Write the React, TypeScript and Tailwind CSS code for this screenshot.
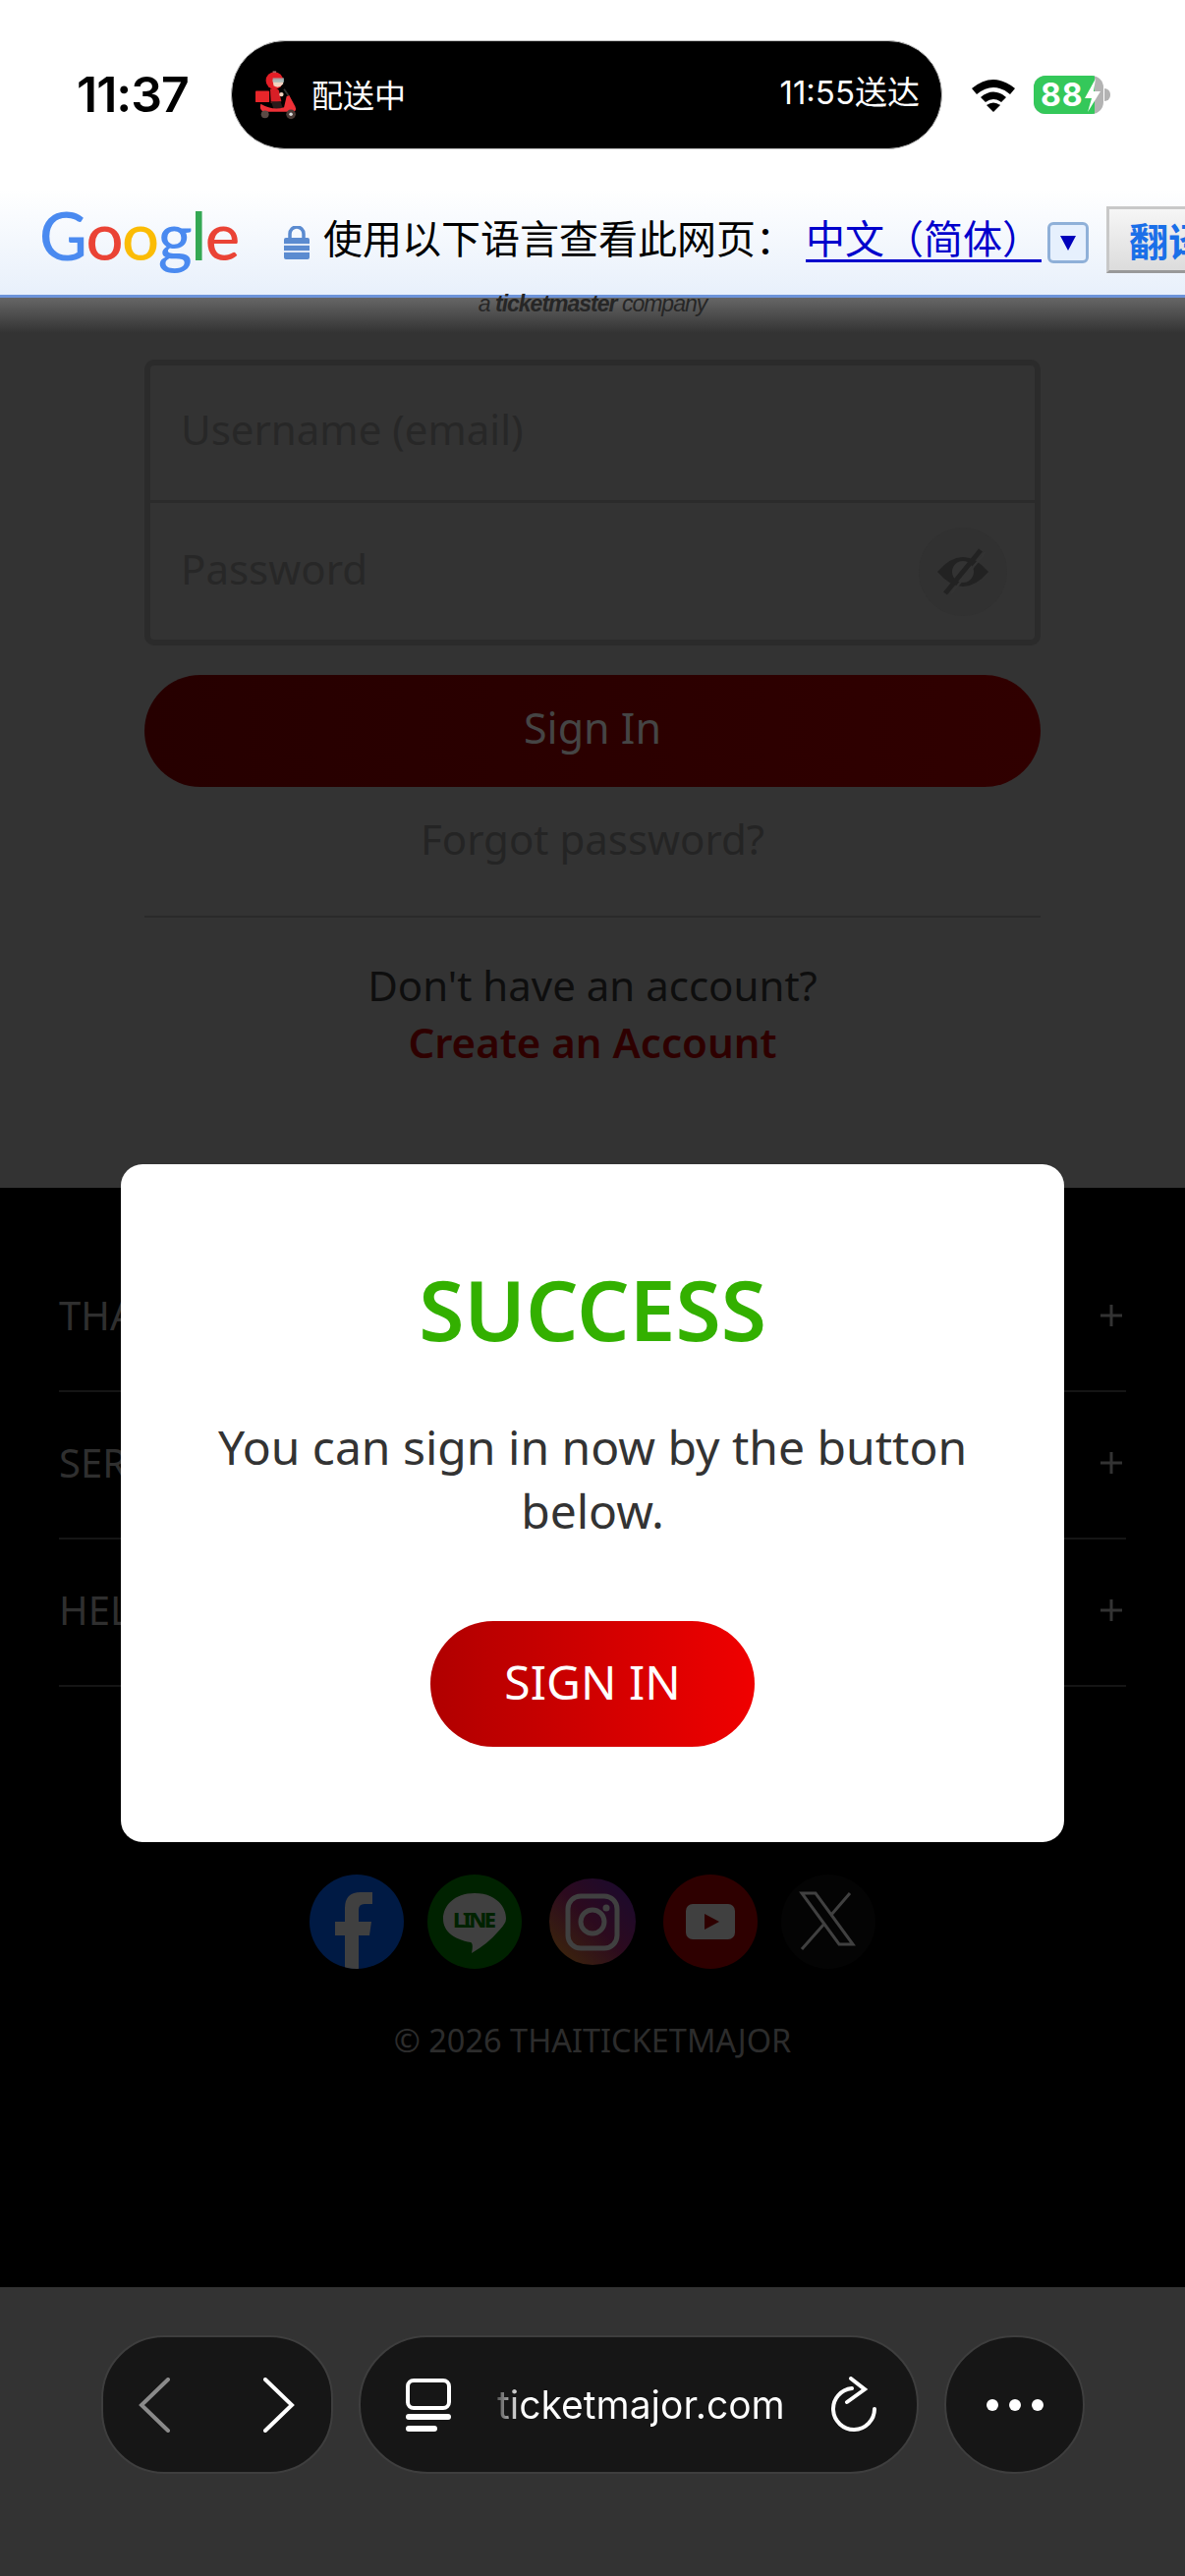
import React from "react";

const sans = "font-['Noto_Sans','Noto_Sans_CJK_SC',sans-serif]";

function Rider() {
  return (
    <svg width="44" height="52" viewBox="0 0 50 56" className="shrink-0">
      <rect x="0" y="23" width="16" height="13" rx="1" fill="#e8262a" />
      <path d="M17 21 q6-3 10 1 l3 13 l-12 2 z" fill="#d81f26" />
      <path d="M18 35 h11 l3 9 h-11 z" fill="#2a1a1a" />
      <path d="M6 38 q14 8 27 4 l3-13 l3-1 l7 13 q2 5 -2 6 h-34 q-6 -1 -4 -9z" fill="#ef3037" />
      <circle cx="11" cy="50" r="4.5" fill="#5a4a44" />
      <circle cx="41" cy="50" r="5.5" fill="#4a3a36" />
      <circle cx="41" cy="50" r="2" fill="#ddd" />
      <circle cx="22" cy="11" r="10" fill="#e41e26" />
      <rect x="20" y="0" width="4" height="2" fill="#a66" />
      <path d="M20 10 h12 v5 q-5 6 -11 2 z" fill="#f3d2c0" />
      <path d="M20 8 h13 v5 h-13z" fill="#9fb8b8" opacity=".85" />
      <path d="M33 21 l5 7" stroke="#333" strokeWidth="2" />
      <circle cx="30" cy="27" r="2.5" fill="#f3d2c0" />
    </svg>
  );
}

function Wifi() {
  return (
    <svg width="48" height="36" viewBox="0 0 48 36" className="shrink-0">
      <path d="M2 11 Q24 -7 46 11 L41 17 Q24 3 7 17 Z" fill="#000" />
      <path d="M11 20 Q24 9 37 20 L32 25 Q24 19 16 25 Z" fill="#000" />
      <path d="M24 35 L17 28 Q24 23 31 28 Z" fill="#000" />
    </svg>
  );
}

function Battery() {
  return (
    <div className="flex items-center shrink-0">
      <div className="relative w-[71px] h-[39px] rounded-[12px] overflow-hidden bg-[#b3b3b3] flex">
        <div className="w-[62px] h-full bg-[#34c85a] pl-[7px] flex items-center text-white font-['Inter',sans-serif] font-bold text-[32px] tracking-[1px] leading-none">
          88
        </div>
        <svg width="18" height="34" viewBox="0 0 18 34" className="absolute left-[51px] top-[3px]">
          <path d="M12 0 L1 20 H8 L4 34 L17 13 H10 Z" fill="#fff" />
        </svg>
      </div>
      <div className="w-[6px] h-[13px] bg-[#b3b3b3] rounded-r-[6px] ml-[1px]" />
    </div>
  );
}

function GoogleLogo() {
  return (
    <div className="w-[206px] shrink-0 font-['Lato',sans-serif] font-medium text-[67px] leading-none tracking-[-1.5px] flex -mt-[14px]">
      <span className="text-[#4a8af0]">G</span>
      <span className="text-[#ea4335]">o</span>
      <span className="text-[#fbbc05]">o</span>
      <span className="text-[#4a8af0]">g</span>
      <span className="text-[#34a853]">l</span>
      <span className="text-[#ea4335]">e</span>
    </div>
  );
}

function Lock() {
  return (
    <svg width="28" height="34" viewBox="0 0 28 34" className="shrink-0">
      <path d="M7 13 V8 a7 7 0 0 1 14 0 v5" fill="none" stroke="#5b8bd0" strokeWidth="3.5" />
      <rect x="1" y="12" width="26" height="22" rx="2" fill="#5b8bd0" />
      <path d="M1 19 H27 M1 26 H27" stroke="#dfe8f6" strokeWidth="2" />
    </svg>
  );
}

function SocialRow() {
  return (
    <div className="flex items-center justify-center gap-[24px]">
      <div className="w-[96px] h-[96px] rounded-full bg-[#001a44] overflow-hidden">
        <svg width="96" height="96" viewBox="0 0 96 96">
          <path d="M36 96 V62 H26 V48 H36 V34 Q36 18 52 18 H64 V30 H56 Q50 30 50 36 V48 H63 L61 62 H50 V96 Z" fill="#404040" />
        </svg>
      </div>
      <div className="w-[96px] h-[96px] rounded-full bg-[#002200] flex items-center justify-center">
        <svg width="96" height="96" viewBox="0 0 96 96">
          <path d="M48 19 C27 19 16 32 16 45 C16 58 27 66 44 69 Q47 70 45 80 Q62 70 72 58 Q80 50 80 45 C80 32 69 19 48 19 Z" fill="#404040" />
          <text x="48" y="54" textAnchor="middle" fontSize="22" fontWeight="800" fontFamily="Noto Sans, sans-serif" fill="#002200" textLength="44">LINE</text>
        </svg>
      </div>
      <div className="mx-[4px] w-[88px] h-[88px] rounded-full bg-[linear-gradient(45deg,#3f2a08,#2c0a1e_50%,#180a30)] flex items-center justify-center">
        <svg width="88" height="88" viewBox="0 0 88 88">
          <rect x="19" y="18" width="50" height="53" rx="13" fill="none" stroke="#404040" strokeWidth="5" />
          <circle cx="44" cy="44" r="12" fill="none" stroke="#404040" strokeWidth="5" />
          <circle cx="58" cy="30" r="3.5" fill="#404040" />
        </svg>
      </div>
      <div className="w-[96px] h-[96px] rounded-full bg-[#2e0000] flex items-center justify-center">
        <svg width="96" height="96" viewBox="0 0 96 96">
          <rect x="23" y="30" width="50" height="36" rx="7" fill="#404040" />
          <path d="M42 40 L57 48 L42 56 Z" fill="#2e0000" />
        </svg>
      </div>
      <div className="w-[96px] h-[96px] rounded-full bg-[#040404] flex items-center justify-center">
        <svg width="96" height="96" viewBox="0 0 96 96">
          <path d="M21 19 H35 L73 71 H59 Z" fill="none" stroke="#404040" strokeWidth="3" />
          <path d="M70 19 L51 41 M44 50 L21 76" stroke="#404040" strokeWidth="3" fill="none" />
        </svg>
      </div>
    </div>
  );
}

function FooterRow({ label }: { label: string }) {
  return (
    <div className="h-[150px] border-b-2 border-[#151515] flex items-center justify-between pb-[4px]">
      <span className="text-[40px] text-[#2f2f2f]">{label}</span>
      <svg width="24" height="24" viewBox="0 0 24 24" className="mr-[3px]">
        <path d="M12 1 V23 M1 12 H23" stroke="#333" strokeWidth="3" />
      </svg>
    </div>
  );
}

export default function App() {
  return (
    <div className={`relative w-[1206px] h-[2622px] overflow-hidden flex flex-col bg-[#333] ${sans}`}>
      {/* status bar */}
      <div className="h-[193px] shrink-0 bg-white flex items-start pt-[41px] pl-[78px]">
        <div className="w-[157px] h-[111px] flex items-center font-['Inter',sans-serif] font-semibold text-[50px] tracking-[-1px] text-black">11:37</div>
        <div className="w-[724px] h-[111px] rounded-[55px] bg-black border border-[#bbb] flex items-center justify-between pl-[24px] pr-[22px] text-white font-['Noto_Sans_CJK_SC',sans-serif] text-[32px]">
          <div className="flex items-center gap-[13px]">
            <Rider />
            <span className="-mt-[3px]">配送中</span>
          </div>
          <span className="font-['Inter','Noto_Sans_CJK_SC',sans-serif] text-[33px] -mt-[3px]">11:55送达</span>
        </div>
        <div className="h-[111px] flex items-center pl-[28px] gap-[17px]">
          <Wifi />
          <Battery />
        </div>
      </div>

      {/* translate bar */}
      <div className="h-[110px] shrink-0 bg-[linear-gradient(#fff,#e8f0fb)] border-b-[3px] border-[#6d93d9] flex items-center pl-[40px] overflow-hidden whitespace-nowrap text-[40px] font-['Noto_Sans_CJK_SC',sans-serif] text-black">
        <GoogleLogo />
        <div className="ml-[42px]"><Lock /></div>
        <span className="ml-[13px] w-[491px] shrink-0 -mt-[12px]">使用以下语言查看此网页：</span>
        <span className="w-[246px] shrink-0 h-[60px] leading-[56px] -mt-[8px] text-[#0000cc] underline underline-offset-[6px] decoration-[3px]">中文（简体）</span>
        <div className="w-[42px] h-[42px] shrink-0 rounded-[6px] border-[3px] border-[#8fb0d8] bg-[#e6f0fd] flex items-center justify-center">
          <svg width="20" height="20" viewBox="0 0 20 20"><path d="M2 3 H18 L10 18 Z" fill="#0000bb" /></svg>
        </div>
        <div className="ml-[18px] -mt-[6px] w-[120px] h-[68px] shrink-0 border-[3px] border-[#c8c8c8] border-b-[#999] bg-[linear-gradient(#f6f6f6,#dcdcdc)] text-[#1a6fe8] font-bold flex items-center pl-[20px]">
          翻译
        </div>
      </div>

      {/* login section */}
      <div className="h-[906px] shrink-0 relative bg-[linear-gradient(#666_0px,#333_36px)] flex flex-col items-center">
        <div className="h-[74px] w-full text-center text-[23px] -mt-[11px] italic font-['Liberation_Sans',sans-serif] tracking-[-1px] text-[#262626]">
          a <b>ticketmaster</b> company
        </div>
        <div className="w-[912px] h-[291px] rounded-[10px] border-[6px] border-[#2b2b2b] flex flex-col text-[42px] text-[#272727]">
          <div className="h-[140px] border-b-[3px] border-[#2b2b2b] flex items-center pl-[31px] pb-[8px]">Username (email)</div>
          <div className="flex-1 flex items-center justify-between pl-[31px] pr-[28px]">
            <span className="-mt-[6px]">Password</span>
            <div className="w-[90px] h-[90px] rounded-full bg-[#313131] flex items-center justify-center">
              <svg width="56" height="48" viewBox="0 0 56 48">
                <path d="M2 24 Q28 -6 54 24 Q28 54 2 24 Z" fill="#222" />
                <circle cx="28" cy="24" r="11" fill="#333" />
                <path d="M10 46 L46 2" stroke="#222" strokeWidth="5" />
                <path d="M16 46 L51 4" stroke="#333" strokeWidth="2" />
              </svg>
            </div>
          </div>
        </div>
        <div className="mt-[30px] w-[912px] h-[114px] rounded-full bg-[linear-gradient(90deg,#260000,#300000)] flex items-center justify-center text-[43px] text-[#454545] pb-[5px]">Sign In</div>
        <div className="mt-[20px] h-[64px] flex items-center text-[42px] text-[#242424]">Forgot password?</div>
        <div className="mt-[47px] w-[912px] border-t-2 border-[#2a2a2a]" />
        <div className="mt-[40px] text-[42px] leading-[58px] text-[#0e0e0e]">Don&apos;t have an account?</div>
        <div className="text-[42px] leading-[58px] font-semibold text-[#2e0000]">Create an Account</div>
      </div>

      {/* footer */}
      <div className="flex-1 bg-black px-[60px] pt-[58px] flex flex-col min-h-0">
        <FooterRow label="THAITICKETMAJOR" />
        <FooterRow label="SERVICES" />
        <FooterRow label="HELP" />
        <div className="mt-[191px]"><SocialRow /></div>
        <div className="mt-[51px] text-center text-[32.5px] leading-[44px] text-[#2c2c2c]">© 2026 THAITICKETMAJOR</div>
      </div>

      {/* browser bar */}
      <div className="h-[294px] shrink-0 bg-[#333] flex items-start pt-[49px] pl-[103px] gap-[26px]">
        <div className="w-[236px] h-[141px] rounded-[64px] bg-[#161616] border-2 border-[#3e3e3e] flex items-center justify-between pl-[36px] pr-[37px]">
          <svg width="32" height="56" viewBox="0 0 32 56"><path d="M30 2 L3 28 L30 54" fill="none" stroke="#8a8a8a" strokeWidth="4" strokeLinecap="round" /></svg>
          <svg width="32" height="56" viewBox="0 0 32 56"><path d="M2 2 L29 28 L2 54" fill="none" stroke="#fff" strokeWidth="4" strokeLinecap="round" /></svg>
        </div>
        <div className="w-[570px] h-[141px] rounded-[70px] bg-[#161616] border-2 border-[#3e3e3e] flex items-center pl-[46px] pr-[41px] text-white">
          <svg width="46" height="54" viewBox="0 0 46 54" className="shrink-0">
            <rect x="2" y="2" width="42" height="28" rx="6" fill="none" stroke="#fff" strokeWidth="4" />
            <rect x="0" y="36" width="46" height="6" rx="3" fill="#fff" />
            <rect x="0" y="48" width="32" height="6" rx="3" fill="#fff" />
          </svg>
          <span className="ml-[47px] mt-[2px] font-['Inter',sans-serif] text-[39px] bg-[linear-gradient(90deg,#555_0,#fff_26px)] bg-clip-text text-transparent">ticketmajor.com</span>
          <svg width="46" height="58" viewBox="0 0 46 58" className="ml-auto shrink-0">
            <path d="M21 12 A21 21 0 1 0 44 33" fill="none" stroke="#fff" strokeWidth="4" strokeLinecap="round" />
            <path d="M20 2 L34 13 L16 26" fill="none" stroke="#fff" strokeWidth="4" strokeLinecap="round" />
          </svg>
        </div>
        <div className="w-[143px] h-[141px] rounded-full bg-[#161616] border-2 border-[#3e3e3e] flex items-center justify-center gap-[11px]">
          <div className="w-[12px] h-[12px] rounded-full bg-white" />
          <div className="w-[12px] h-[12px] rounded-full bg-white" />
          <div className="w-[12px] h-[12px] rounded-full bg-white" />
        </div>
      </div>

      {/* modal */}
      <div className="absolute left-[123px] top-[1185px] w-[960px] h-[690px] rounded-[22px] bg-white flex flex-col items-center pt-[103px]">
        <div className="text-[84px] leading-[90px] font-semibold text-[#33b000]">SUCCESS</div>
        <div className="mt-[62px] w-[800px] text-center text-[48px] leading-[65px] text-[#333]">You can sign in now by the button below.</div>
        <div className="mt-[80px] w-[330px] h-[128px] rounded-full bg-[linear-gradient(90deg,#b00000,#f00000)] flex items-center justify-center text-white text-[48px] pb-[5px]">SIGN IN</div>
      </div>
    </div>
  );
}
